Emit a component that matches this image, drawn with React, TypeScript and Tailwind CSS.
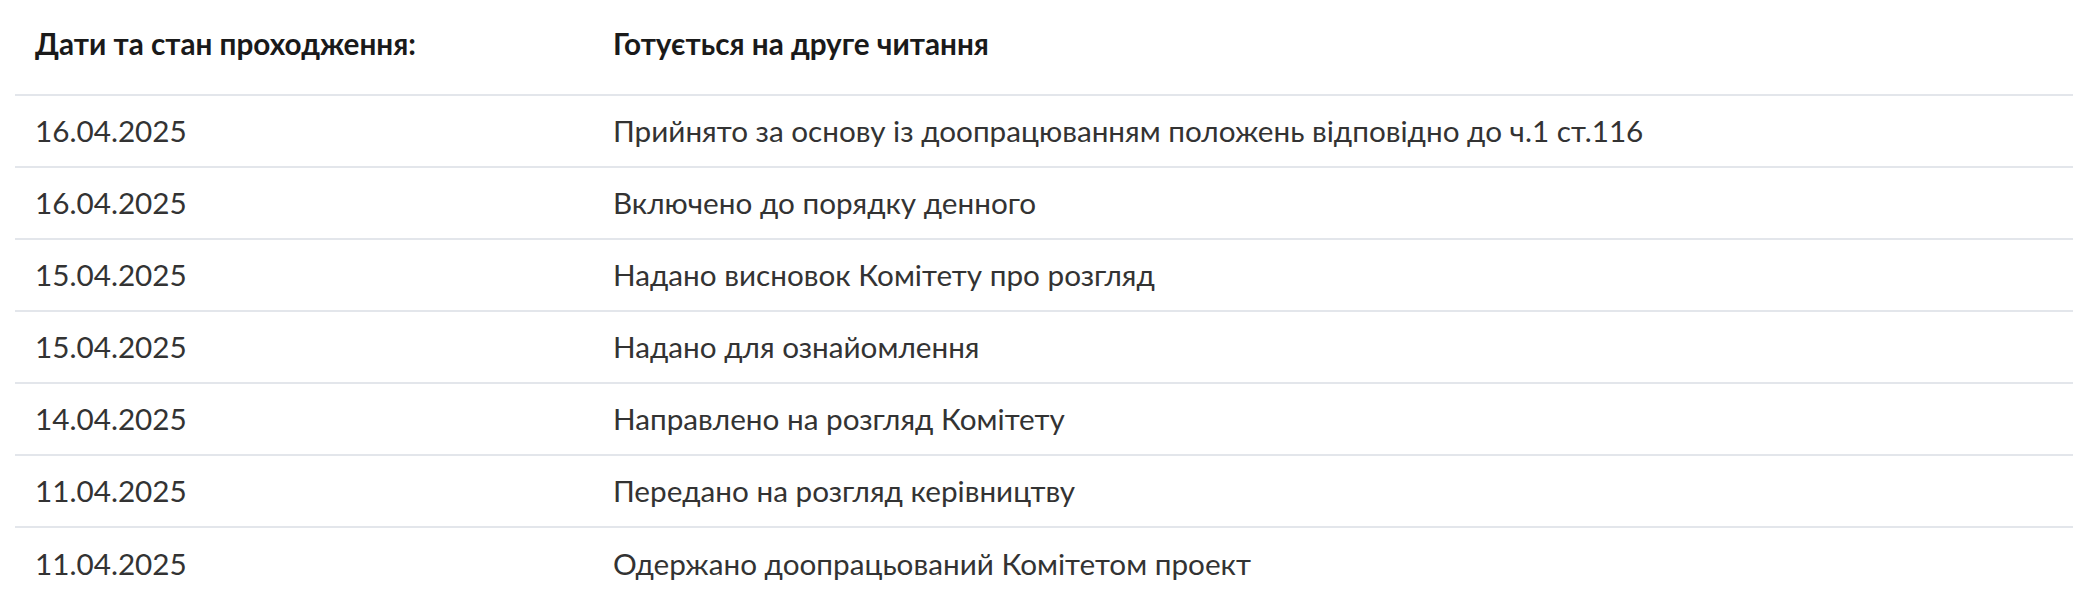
import React from "react";

const rows: [string, string][] = [
  ["16.04.2025", "Прийнято за основу із доопрацюванням положень відповідно до ч.1 ст.116"],
  ["16.04.2025", "Включено до порядку денного"],
  ["15.04.2025", "Надано висновок Комітету про розгляд"],
  ["15.04.2025", "Надано для ознайомлення"],
  ["14.04.2025", "Направлено на розгляд Комітету"],
  ["11.04.2025", "Передано на розгляд керівництву"],
  ["11.04.2025", "Одержано доопрацьований Комітетом проект"],
];

export default function App() {
  return (
    <div className="min-h-[600px] bg-white pl-[15px] pr-[5px] font-['Lato','Noto_Sans',sans-serif]">
      <div className="grid grid-cols-[598px_1fr] h-[96px] pt-[26px] border-b-2 border-[#e3e6eb] text-[29.7px] leading-[36px] font-bold text-[#1a1a1a]">
        <div className="pl-[20px]">Дати та стан проходження:</div>
        <div>Готується на друге читання</div>
      </div>
      {rows.map(([d, t], i) => (
        <div
          key={i}
          className={`grid grid-cols-[598px_1fr] items-center h-[72px] text-[29.7px] leading-[36px] text-[#333333] ${
            i < rows.length - 1 ? "border-b-2 border-[#e3e6eb]" : ""
          }`}
        >
          <div className="pl-[20px]">{d}</div>
          <div>{t}</div>
        </div>
      ))}
    </div>
  );
}
